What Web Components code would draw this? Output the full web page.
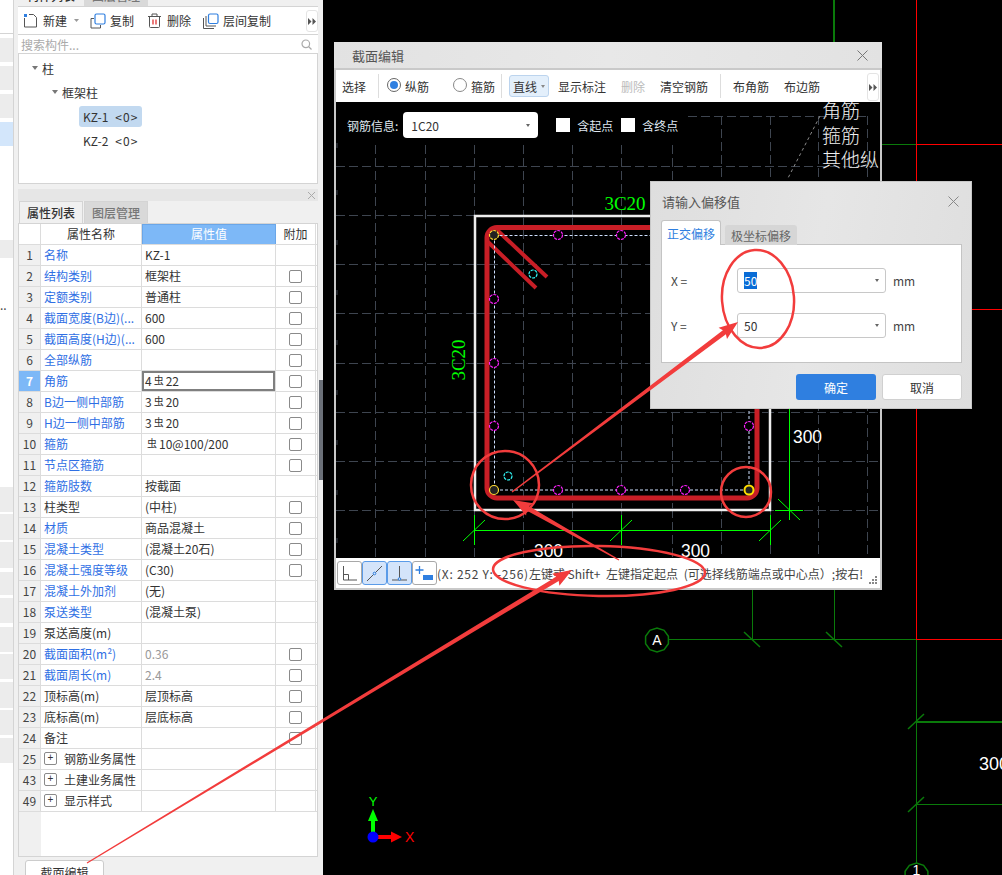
<!DOCTYPE html>
<html lang="zh">
<head>
<meta charset="utf-8">
<title>截面编辑</title>
<style>
  html, body { margin: 0; height: 100%; background: #000; overflow: hidden; }
  body { font: 12px "Noto Sans CJK SC", "Noto Sans", sans-serif; color: #333; }
</style>
</head>
<body>
<app-shell>
  <side-strip></side-strip>
  <left-dock>
    <component-panel></component-panel>
    <prop-panel></prop-panel>
  </left-dock>
  <cad-view>
    <section-editor></section-editor>
    <offset-dialog></offset-dialog>
  </cad-view>
  <markup-overlay></markup-overlay>
</app-shell>

<script>
const FONT = '"Noto Sans CJK SC", "Noto Sans", sans-serif';
const MORE_ICON = `<svg width="8" height="7" viewBox="0 0 8 7"><path d="M0 0l3.5 3.5L0 7zM4.5 0L8 3.5 4.5 7z" fill="#555"/></svg>`;

class AppShell extends HTMLElement {
  constructor() {
    super();
    this.attachShadow({ mode: 'open' });
    this.shadowRoot.innerHTML = `
      <style>
        :host { display: flex; position: relative; width: 1002px; height: 875px; overflow: hidden; background: #000; }
      </style>
      <slot></slot>
    `;
  }
}
customElements.define('app-shell', AppShell);

// narrow strip of the module list, cut by the left of the window
class SideStrip extends HTMLElement {
  constructor() {
    super();
    this.attachShadow({ mode: 'open' });
    const gaps = [[38, 24, 0], [66, 24, 0], [94, 24, 0], [122, 24, 1], [240, 18, 0], [487, 25, 0], [514, 26, 0], [542, 26, 0],
      [572, 23, 0], [598, 25, 0], [627, 25, 0], [654, 25, 0], [682, 26, 0], [710, 25, 0], [738, 25, 0]];
    let y = 34;
    let html = '';
    gaps.forEach(([top, h, sel]) => {
      html += `<div style="margin-top:${top - y}px;height:${h}px;background:${sel ? '#d3e6fb' : '#ececec'}"></div>`;
      y = top + h;
    });
    this.shadowRoot.innerHTML = `
      <style>
        :host { display: block; flex: 0 0 13px; height: 875px; box-sizing: content-box; background: #fff; border-right: 1px solid #d4d4d4; position: relative; }
        .top { height: 33px; border-bottom: 1px solid #d4d4d4; }
        .dots { position: absolute; left: 0; top: 301px; color: #444; font: 12px ${FONT}; line-height: 8px; }
      </style>
      <div class="top"></div>${html}<div class="dots">..</div>
    `;
  }
}
customElements.define('side-strip', SideStrip);

class LeftDock extends HTMLElement {
  constructor() {
    super();
    this.attachShadow({ mode: 'open' });
    this.shadowRoot.innerHTML = `
      <style>
        :host { display: flex; flex-direction: column; flex: 0 0 309px; height: 875px; box-sizing: border-box; padding: 0 5px 0 4px; background: #f0f0f0; overflow: hidden; position: relative; }
        .grip { position: absolute; right: 0; top: 380px; width: 4px; height: 100px; background: #6b7078; }
      </style>
      <slot></slot>
      <div class="grip"></div>
    `;
  }
}
customElements.define('left-dock', LeftDock);

class ComponentPanel extends HTMLElement {
  constructor() {
    super();
    this.attachShadow({ mode: 'open' });
    this.shadowRoot.innerHTML = `
      <style>
        :host { display: block; font: 12px ${FONT}; color: #333; }
        .tabs { display: flex; height: 6px; align-items: flex-end; overflow: hidden; border-bottom: 1px solid #d4d4d4; padding-left: 1px; }
        .tabs span { flex: 0 0 64px; height: 22px; line-height: 24px; text-align: center; font-weight: 500; margin-right: 1px; }
        .tabs span + span { background: #d9d9d9; color: #777; }
        .bar { display: flex; align-items: center; height: 27px; background: #fff; border-bottom: 1px solid #d4d4d4; position: relative; }
        .bar svg { display: block; flex: none; }
        .it { display: flex; align-items: center; }
        .more { position: absolute; left: 288px; top: 3px; width: 10px; height: 20px; border: 1px solid #e4e4e4; border-radius: 3px; display: flex; align-items: center; justify-content: center; }
        .search { display: flex; align-items: center; justify-content: space-between; height: 18px; padding: 0 6px 0 3px; background: #fff; border-bottom: 1px solid #d4d4d4; color: #aaa; }
        .tree { height: 130px; box-sizing: border-box; background: #fff; border: 1px solid #d4d4d4; border-top: 0; padding-top: 2px; }
        .row { display: flex; align-items: center; height: 24px; }
        .row i { width: 0; height: 0; border: 3px solid transparent; border-top: 4px solid #777; border-bottom: 0; margin-right: 4px; }
        .kz { display: inline-flex; align-items: center; height: 21px; padding: 0 4px; margin-left: 60px; border-radius: 3px; }
        .kz.sel { background: #c2d9f0; }
        .kz small { font-size: 12px; margin-left: 7px; letter-spacing: 1px; }
      </style>
      <div class="tabs"><span>构件列表</span><span>图层管理</span></div>
      <div class="bar">
        <div class="it" style="margin-left:5px">
          <svg width="15" height="15" viewBox="0 0 15 15"><path d="M1.5 5v9h12V4.500L10.500 1.500H6" fill="none" stroke="#555"/><path d="M1 1h3v3H1z" fill="#2f7fe0"/></svg>
          <span style="margin-left:5px">新建</span>
          <svg width="5" height="3" viewBox="0 0 5 3" style="margin-left:7px"><path d="M0 0h5L2.500 3z" fill="#999"/></svg>
        </div>
        <div class="it" style="margin-left:11px">
          <svg width="16" height="16" viewBox="0 0 16 16"><path d="M1 5.500v9.500h9.500" fill="none" stroke="#555"/><path d="M1 5.500h3M10.500 12v3" stroke="#555" fill="none"/><rect x="5" y="1" width="10" height="10" rx="1.500" fill="#fff" stroke="#2f7fe0" stroke-width="1.200"/></svg>
          <span style="margin-left:4px">复制</span>
        </div>
        <div class="it" style="margin-left:13px">
          <svg width="15" height="15" viewBox="0 0 15 15"><path d="M2.500 4v9.500a1 1 0 0 0 1 1h8a1 1 0 0 0 1-1V4M1 3.500h13M5 3.500V1h5v2.500" fill="none" stroke="#555"/><path d="M6 6.500v5M9 6.500v5" stroke="#d22" stroke-width="1.200"/></svg>
          <span style="margin-left:5px">删除</span>
        </div>
        <div class="it" style="margin-left:12px">
          <svg width="16" height="16" viewBox="0 0 16 16"><path d="M.5 5v10.500H11M3 3v10h10" fill="none" stroke="#555"/><rect x="5.500" y="1" width="9.500" height="9.500" rx="1.500" fill="#fff" stroke="#2f7fe0" stroke-width="1.200"/></svg>
          <span style="margin-left:4px">层间复制</span>
        </div>
        <div class="more">${MORE_ICON}</div>
      </div>
      <div class="search"><span>搜索构件...</span>
        <svg width="11" height="11" viewBox="0 0 11 11"><circle cx="4.800" cy="4.800" r="3.800" fill="none" stroke="#aaa" stroke-width="1.200"/><path d="M7.500 7.500L10.500 10.500" stroke="#aaa" stroke-width="1.200"/></svg>
      </div>
      <div class="tree">
        <div class="row" style="padding-left:13px"><i></i>柱</div>
        <div class="row" style="padding-left:33px"><i></i>框架柱</div>
        <div class="row"><span class="kz sel">KZ-1<small>&lt;0&gt;</small></span></div>
        <div class="row"><span class="kz">KZ-2<small>&lt;0&gt;</small></span></div>
      </div>
    `;
  }
}
customElements.define('component-panel', ComponentPanel);

class PropPanel extends HTMLElement {
  constructor() {
    super();
    this.attachShadow({ mode: 'open' });
    const bar = '<sup>虫</sup>';
    // [no, name, value, blue name, checkbox, extra]
    const rows = [
      [1, '名称', 'KZ-1', 1, 0],
      [2, '结构类别', '框架柱', 1, 1],
      [3, '定额类别', '普通柱', 1, 1],
      [4, '截面宽度(B边)(...', '600', 1, 1],
      [5, '截面高度(H边)(...', '600', 1, 1],
      [6, '全部纵筋', '', 1, 1],
      [7, '角筋', `4${bar}22`, 1, 1, 'sel'],
      [8, 'B边一侧中部筋', `3${bar}20`, 1, 1],
      [9, 'H边一侧中部筋', `3${bar}20`, 1, 1],
      [10, '箍筋', `${bar}10@100/200`, 1, 1],
      [11, '节点区箍筋', '', 1, 1],
      [12, '箍筋肢数', '按截面', 1, 0],
      [13, '柱类型', '(中柱)', 0, 1],
      [14, '材质', '商品混凝土', 1, 1],
      [15, '混凝土类型', '(混凝土20石)', 1, 1],
      [16, '混凝土强度等级', '(C30)', 1, 1],
      [17, '混凝土外加剂', '(无)', 1, 0],
      [18, '泵送类型', '(混凝土泵)', 1, 0],
      [19, '泵送高度(m)', '', 0, 0],
      [20, '截面面积(m²)', '0.36', 1, 1, 'dim'],
      [21, '截面周长(m)', '2.4', 1, 1, 'dim'],
      [22, '顶标高(m)', '层顶标高', 0, 1],
      [23, '底标高(m)', '层底标高', 0, 1],
      [24, '备注', '', 0, 1],
      [25, '钢筋业务属性', '', 0, 0, 'plus'],
      [43, '土建业务属性', '', 0, 0, 'plus'],
      [49, '显示样式', '', 0, 0, 'plus']
    ];
    const rowHtml = rows.map(([no, name, val, blue, check, extra]) => `
      <div class="r">
        <div class="no ${extra === 'sel' ? 'on' : ''}">${no}</div>
        <div class="name ${blue ? 'blue' : ''}">${extra === 'plus' ? '<b class="plus">+</b>' : ''}${name}</div>
        <div class="val ${extra === 'plus' ? '' : extra || ''}">${val}</div>
        <div class="add">${check ? '<em></em>' : ''}</div>
      </div>`).join('');
    this.shadowRoot.innerHTML = `
      <style>
        :host { display: flex; flex-direction: column; margin-top: 5px; font: 12px ${FONT}; color: #333; }
        .title { height: 12px; background: #e6e6e6; position: relative; }
        .title svg { position: absolute; right: 3px; top: 3px; }
        .tabs { display: flex; height: 23px; padding-left: 1px; align-items: stretch; border-bottom: 1px solid #d4d4d4; box-sizing: border-box; }
        .tabs span { flex: 0 0 64px; margin-right: 1px; display: flex; align-items: center; justify-content: center; font-weight: 500; border: 1px solid #d4d4d4; border-width: 1px 1px 0 1px; box-sizing: border-box; }
        .tabs span + span { background: #d9d9d9; color: #777; }
        .body { background: #fff; border: 1px solid #d4d4d4; border-top: 0; height: 633px; display: flex; flex-direction: column; box-sizing: border-box; }
        .r { display: grid; grid-template-columns: 22px 101px 134px 40px; height: 21px; box-sizing: border-box; border-bottom: 1px solid #dcdcdc; }
        .r > div { border-right: 1px solid #dcdcdc; display: flex; align-items: center; white-space: nowrap; overflow: hidden; padding-bottom: 2px; box-sizing: border-box; }
        .r > .add { padding-bottom: 0; }
        .head > div { justify-content: center; }
        .head .v { background: #7db8f7; color: #fff; border: 1px solid #6aa6e8; border-bottom: 0; }
        .no { justify-content: center; background: #f0f0f0; color: #444; }
        .no.on { background: #7db8f7; color: #fff; font-weight: 700; }
        .name { padding-left: 3px; }
        .name.blue { color: #2f6fe4; }
        .val { padding-left: 3px; }
        .val.dim { color: #999; }
        .val.sel { box-shadow: inset 0 0 0 2px #7f7f7f; }
        sup { font-size: 10px; line-height: 1; vertical-align: 3px; margin: 0 2px; }
        .add { justify-content: center; }
        .add em { display: block; width: 13px; height: 13px; border: 1px solid #8a8a8a; border-radius: 2px; box-sizing: border-box; }
        .plus { display: inline-flex; align-items: center; justify-content: center; width: 11px; height: 11px; margin-right: 7px; border: 1px solid #8a8a8a; border-radius: 2px; font: 400 10px/1 "Liberation Sans", sans-serif; box-sizing: content-box; }
        .rest { flex: 1; width: 22px; background: #f0f0f0; }
        .btn { align-self: flex-start; margin: 3px 0 0 7px; width: 79px; height: 24px; background: #fff; border: 1px solid #ccc; border-radius: 3px; display: flex; align-items: center; justify-content: center; box-sizing: border-box; }
      </style>
      <div class="title"><svg width="7" height="7" viewBox="0 0 7 7"><path d="M0 0l7 7M7 0L0 7" stroke="#aaa"/></svg></div>
      <div class="tabs"><span>属性列表</span><span>图层管理</span></div>
      <div class="body">
        <div class="r head"><div></div><div>属性名称</div><div class="v">属性值</div><div>附加</div></div>
        ${rowHtml}
        <div class="rest"></div>
      </div>
      <div class="btn">截面编辑</div>
    `;
  }
}
customElements.define('prop-panel', PropPanel);

// main drawing behind the floating windows
class CadView extends HTMLElement {
  constructor() {
    super();
    this.attachShadow({ mode: 'open' });
    const G = '#0a7a0a';
    const tick = (x1, y1, x2, y2) => `<path d="M${x1} ${y1}L${x2} ${y2}" stroke="${G}" stroke-width="1.500"/>`;
    const octa = (cx, cy, r) => {
      const pts = [];
      for (let i = 0; i < 10; i++) {
        const a = (i * 36 + 18) * Math.PI / 180;
        pts.push(`${(cx + r * Math.cos(a)).toFixed(1)},${(cy + r * Math.sin(a)).toFixed(1)}`);
      }
      return `<polygon points="${pts.join(' ')}" fill="#000" stroke="${G}" stroke-width="1.500"/>`;
    };
    this.shadowRoot.innerHTML = `
      <style>
        :host { display: block; flex: 1; height: 875px; position: relative; background: #000; }
        svg { position: absolute; left: 0; top: 0; display: block; }
        text { font-family: "Liberation Sans", sans-serif; }
      </style>
      <svg width="679" height="875" viewBox="323 0 679 875">
        <path d="M834 0V42" stroke="${G}" stroke-width="2"/>
        <path d="M882 144.500H916M752.500 588V640M834.500 588V640M668 639.500H916M916.500 639.500V864" stroke="${G}" fill="none"/>
        <path d="M916.500 722H1002" stroke="${G}" stroke-width="2"/>
        <path d="M916.500 804.500H1002" stroke="${G}"/>
        ${tick(744, 632, 760, 647)}${tick(826, 632, 842, 647)}${tick(908, 729, 924, 714)}${tick(908, 812, 924, 797)}
        <path d="M916.500 0V640M916 144.500H1002M972 309.500H1002M916 639.500H1002" stroke="#f00" fill="none"/>
        ${octa(657, 640, 12)}
        <text x="657" y="645" fill="#fff" font-size="14" text-anchor="middle">A</text>
        ${octa(916.5, 875, 12)}
        <text x="916.500" y="875" fill="#fff" font-size="14" text-anchor="middle">1</text>
        <text x="979" y="770" fill="#fff" font-size="18">300</text>
        <path d="M373 836V817" stroke="#0f0" stroke-width="4"/><path d="M373 809l5 12h-10z" fill="#0f0"/>
        <text x="373" y="806" fill="#0f0" font-size="13" text-anchor="middle">Y</text>
        <path d="M373 837h20" stroke="#f00" stroke-width="4"/><path d="M402 837l-11-5.500v11z" fill="#f00"/>
        <text x="405" y="842" fill="#f00" font-size="14">X</text>
        <circle cx="373" cy="837" r="5.500" fill="#00f"/>
      </svg>
      <slot></slot>
    `;
  }
}
customElements.define('cad-view', CadView);

class SectionEditor extends HTMLElement {
  constructor() {
    super();
    this.attachShadow({ mode: 'open' });
    this.shadowRoot.innerHTML = `
      <style>
        :host { display: flex; flex-direction: column; position: absolute; left: 11px; top: 42px; width: 548px; height: 548px; box-sizing: border-box; background: #c9c9c9; padding: 0 2px 2px 2px; font: 12px ${FONT}; color: #333; }
        .title { margin: 0 -2px; height: 26px; flex: none; background: linear-gradient(90deg, #e2e2e2, #e8e8e8 50%, #e2e2e2); display: flex; align-items: center; justify-content: space-between; padding: 0 14px 0 18px; color: #555; font-size: 13px; }
        .bar { margin-top: 2px; height: 32px; flex: none; background: #fff; display: flex; align-items: center; position: relative; }
        .bar > * { position: absolute; white-space: nowrap; }
        .sep { width: 1px; height: 24px; top: 4px; background: #ddd; }
        .radio { width: 14px; height: 14px; top: 8px; border: 1px solid #888; border-radius: 50%; box-sizing: border-box; }
        .radio.on { border-color: #666; }
        .radio.on::after { content: ""; position: absolute; left: 2px; top: 2px; width: 8px; height: 8px; border-radius: 50%; background: #2f7fe0; }
        .drop { left: 173px; top: 5px; width: 40px; height: 22px; box-sizing: border-box; background: #e3effb; border: 1px solid #bcd4ee; border-radius: 3px; display: flex; align-items: center; padding-left: 3px; gap: 4px; }
        .drop i { width: 0; height: 0; border: 2.500px solid transparent; border-top: 3px solid #888; border-bottom: 0; }
        .more { left: 531px; top: 3px; width: 10px; height: 26px; border: 1px solid #e4e4e4; border-radius: 3px; display: flex; align-items: center; justify-content: center; }
        .canvas { flex: 1; background: #000; position: relative; overflow: hidden; }
        .canvas svg { position: absolute; left: 0; top: 0; display: block; }
        .info { position: absolute; left: 11px; top: 10px; display: flex; align-items: center; color: #dfe6ee; height: 26px; }
        .sel { width: 135px; height: 26px; margin-left: 5px; box-sizing: border-box; background: #fff; color: #333; border-radius: 4px; display: flex; align-items: center; justify-content: space-between; padding: 0 8px 0 8px; }
        .sel i { width: 0; height: 0; border: 2.500px solid transparent; border-top: 3px solid #666; border-bottom: 0; }
        .cb { width: 14px; height: 14px; background: #fff; margin-right: 7px; }
        .status { height: 30px; flex: none; background: #fff; display: flex; align-items: center; position: relative; overflow: hidden; }
        .tools { display: flex; margin-left: 1px; flex: none; }
        .tools b { display: flex; width: 25px; height: 24px; box-sizing: border-box; border: 1px solid #a8a8a8; border-radius: 3px; align-items: center; justify-content: center; }
        .tools b.on { background: #d4e4fa; border-color: #5a9be8; }
        .msg { white-space: nowrap; width: 429px; overflow: hidden; flex: none; color: #444; }
        .msg .xy { letter-spacing: .75px; }
        .msg .gap { margin-left: 3px; }
        .grip { position: absolute; right: 3px; bottom: 4px; }
      </style>
      <div class="title"><span>截面编辑</span>
        <svg width="11" height="11" viewBox="0 0 11 11"><path d="M.5 .5l10 10M10.500 .5l-10 10" stroke="#777"/></svg>
      </div>
      <div class="bar">
        <span style="left:6px">选择</span>
        <div class="sep" style="left:42px"></div>
        <div class="radio on" style="left:51px"></div><span style="left:69px">纵筋</span>
        <div class="radio" style="left:117px"></div><span style="left:135px">箍筋</span>
        <div class="sep" style="left:165px"></div>
        <div class="drop"><span>直线</span><i></i></div>
        <span style="left:222px">显示标注</span>
        <span style="left:285px;color:#bbb">删除</span>
        <span style="left:324px">清空钢筋</span>
        <div class="sep" style="left:384px"></div>
        <span style="left:397px">布角筋</span>
        <span style="left:448px">布边筋</span>
        <div class="more">${MORE_ICON}</div>
      </div>
      <div class="canvas">
        <svg id="draw" width="544" height="456" viewBox="336 102 544 456"></svg>
        <div class="info">
          <span>钢筋信息:</span>
          <div class="sel"><span>1C20</span><i></i></div>
          <div class="cb" style="margin-left:18px"></div><span>含起点</span>
          <div class="cb" style="margin-left:8px"></div><span>含终点</span>
        </div>
      </div>
      <div class="status">
        <div class="tools">
          <b><svg width="17" height="17" viewBox="0 0 17 17" fill="none" stroke="#555"><path d="M2.500 1v14H16M2.500 9.500h5v5.500"/></svg></b>
          <b class="on"><svg width="17" height="17" viewBox="0 0 17 17" fill="none" stroke="#555"><path d="M1 16L16 1"/><circle cx="8.500" cy="8.500" r="1.300" stroke="#2f7fe0" fill="#d4e4fa"/></svg></b>
          <b class="on"><svg width="17" height="17" viewBox="0 0 17 17" fill="none" stroke="#555"><path d="M8.500 1v13M1 15h15"/><circle cx="8.500" cy="14" r="1.300" stroke="#2f7fe0" fill="#d4e4fa"/></svg></b>
          <b><svg width="19" height="17" viewBox="0 0 19 17" fill="none"><path d="M4.500 1v8M.5 5h8" stroke="#2f7fe0" stroke-width="1.300"/><rect x="8" y="10" width="10" height="5" fill="#2f7fe0"/></svg></b>
        </div>
        <div class="msg"><span class="xy">(X: 252 Y: -256)</span>左键或 Shift+<span class="gap"> 左键指定起点</span><span class="gap"> (可选择线筋端点或中心点）;按右!</span></div>
        <svg class="grip" width="8" height="8" viewBox="0 0 8 8" fill="#888"><path d="M6 0h2v2H6zM3 3h2v2H3zM6 3h2v2H6zM0 6h2v2H0zM3 6h2v2H3zM6 6h2v2H6z"/></svg>
      </div>
    `;
    this.shadowRoot.getElementById('draw').innerHTML = this.drawing();
  }

  drawing() {
    const GRID = '#3e4550';
    const GREEN = '#00ff00';
    let s = '';
    // dashed construction grid
    [375, 425, 474, 523, 572, 621, 672].forEach(x => {
      s += `<path d="M${x}.5 145V558" stroke="${GRID}" stroke-dasharray="9 4"/>`;
    });
    [721, 770, 818, 867].forEach(x => {
      s += `<path d="M${x}.5 116V558" stroke="${GRID}" stroke-dasharray="9 4"/>`;
    });
    s += `<path d="M688 116.500H868" stroke="${GRID}" stroke-dasharray="9 4"/>`;
    [166, 215, 264, 313, 363, 412, 461, 510].forEach(y => {
      s += `<path d="M336 ${y}.5H879" stroke="${GRID}" stroke-dasharray="9 4"/>`;
    });
    [143, 190, 240, 290, 340, 390, 440, 490, 538].forEach(y => {
      s += `<path d="M337 ${y}v5" stroke="${GRID}"/>`;
    });
    s += `<path d="M820 116L787 180" stroke="#8a8a8a" stroke-dasharray="3 3"/>`;
    // section outline and stirrup
    s += `<rect x="475" y="216" width="295" height="294" fill="#000" stroke="#eee" stroke-width="2.500"/>`;
    [523, 572, 621, 672, 721].forEach(x => {
      s += `<path d="M${x}.5 217V509" stroke="${GRID}" stroke-dasharray="9 4"/>`;
    });
    [264, 313, 363, 412, 461].forEach(y => {
      s += `<path d="M476 ${y}.5H769" stroke="${GRID}" stroke-dasharray="9 4"/>`;
    });
    s += `<rect x="487" y="227.500" width="270" height="270.500" rx="10" fill="none" stroke="#c81e26" stroke-width="5"/>`;
    s += `<path d="M497 230L547 277M488 242L536 288" stroke="#c81e26" stroke-width="4"/>`;
    s += `<rect x="494.500" y="235.500" width="254.500" height="254.500" fill="none" stroke="#cfe0ff" stroke-dasharray="3 2"/>`;
    [[558, 235], [621, 235], [685, 235], [494, 299], [494, 363], [494, 426], [749, 426], [558, 490], [621, 490], [685, 490]].forEach(([x, y]) => {
      s += `<circle cx="${x}" cy="${y}" r="4.500" fill="#000" stroke="#ff20ff" stroke-width="1.200" stroke-dasharray="3 1"/>`;
    });
    [[533, 274], [508, 476]].forEach(([x, y]) => {
      s += `<circle cx="${x}" cy="${y}" r="4" fill="#000" stroke="#3ff" stroke-width="1.200" stroke-dasharray="3 1"/>`;
    });
    s += `<circle cx="494" cy="235" r="4.500" fill="#222" stroke="#fd3" stroke-width="1.200" stroke-dasharray="3 1"/>`;
    s += `<circle cx="494" cy="490" r="4.500" fill="#222" stroke="#fd3" stroke-width="1.200"/>`;
    s += `<circle cx="749" cy="490" r="4.500" fill="#222" stroke="#fd0" stroke-width="2"/>`;
    // dimensions
    s += `<path d="M474 530.500H770M474.500 515V545M621.500 515V545M770.500 515V545M463 541L485 520M610 541L632 520M759 541L781 520M789.500 409V520M775 510.500H803M778 499L800 520" stroke="${GREEN}" fill="none"/>`;
    s += `<text x="625" y="210" fill="${GREEN}" font-size="19" text-anchor="middle" font-family="Liberation Serif">3C20</text>`;
    s += `<text transform="translate(465 360) rotate(-90)" fill="${GREEN}" font-size="19" text-anchor="middle" font-family="Liberation Serif">3C20</text>`;
    [[534, 557], [681, 557], [793, 443]].forEach(([x, y]) => {
      s += `<text x="${x}" y="${y}" fill="#fff" font-size="19" textLength="29" lengthAdjust="spacingAndGlyphs" font-family="Liberation Sans">300</text>`;
    });
    ['角筋', '箍筋', '其他纵'].forEach((t, i) => {
      s += `<text x="822" y="${118 + i * 24.5}" fill="#f0f0f0" font-size="19" font-family="'Noto Sans CJK SC'" font-weight="300">${t}</text>`;
    });
    return s;
  }
}
customElements.define('section-editor', SectionEditor);

class OffsetDialog extends HTMLElement {
  constructor() {
    super();
    this.attachShadow({ mode: 'open' });
    this.shadowRoot.innerHTML = `
      <style>
        :host { display: flex; flex-direction: column; position: absolute; left: 327px; top: 181px; width: 322px; height: 228px; box-sizing: border-box; padding: 0 9px 0 10px; background: linear-gradient(100deg, #dedede, #e6e6e6 50%, #dedede); border: 1px solid #c8c8c8; font: 12px ${FONT}; color: #444; }
        .title { height: 38px; flex: none; display: flex; align-items: center; justify-content: space-between; font-size: 13px; color: #555; padding: 0 3px 0 1px; }
        .tabs { display: flex; align-items: flex-end; height: 25px; flex: none; gap: 4px; margin-bottom: -1px; position: relative; }
        .tabs span { display: flex; align-items: center; justify-content: center; }
        .a { width: 60px; height: 25px; background: #fff; color: #2f7fe0; border: 1px solid #c4c4c4; border-bottom: 0; border-radius: 3px 3px 0 0; box-sizing: border-box; }
        .b { width: 72px; height: 20px; background: #d6d6d6; color: #666; border-radius: 3px 3px 0 0; }
        .box { height: 119px; flex: none; background: #fff; border: 1px solid #c4c4c4; box-sizing: border-box; padding-top: 23px; display: flex; flex-direction: column; gap: 20px; }
        .line { display: flex; align-items: center; height: 25px; padding-left: 9px; }
        .line .lb { width: 66px; }
        .in { width: 149px; height: 25px; box-sizing: border-box; border: 1px solid #c8c8c8; border-radius: 3px; display: flex; align-items: center; justify-content: space-between; padding: 0 6px; color: #333; margin-right: 7px; }
        .in i { width: 0; height: 0; border: 2.500px solid transparent; border-top: 3px solid #666; border-bottom: 0; }
        .hi { background: #0a6cd6; color: #fff; }
        .btns { display: flex; justify-content: flex-end; gap: 6px; margin-top: 11px; }
        .btns span { width: 80px; height: 26px; display: flex; align-items: center; justify-content: center; border-radius: 3px; box-sizing: border-box; }
        .ok { background: #2f7fe0; color: #fff; }
        .no { background: #fff; border: 1px solid #d0d0d0; color: #333; }
      </style>
      <div class="title"><span>请输入偏移值</span>
        <svg width="11" height="11" viewBox="0 0 11 11"><path d="M.5 .5l10 10M10.500 .5l-10 10" stroke="#888"/></svg>
      </div>
      <div class="tabs"><span class="a">正交偏移</span><span class="b">极坐标偏移</span></div>
      <div class="box">
        <div class="line"><span class="lb">X =</span><div class="in"><span class="hi">50</span><i></i></div><span>mm</span></div>
        <div class="line"><span class="lb">Y =</span><div class="in"><span>50</span><i></i></div><span>mm</span></div>
      </div>
      <div class="btns"><span class="ok">确定</span><span class="no">取消</span></div>
    `;
  }
}
customElements.define('offset-dialog', OffsetDialog);

// hand drawn red notes on top of the whole screenshot
class MarkupOverlay extends HTMLElement {
  constructor() {
    super();
    this.attachShadow({ mode: 'open' });
    const RED = '#f23c3c';
    const arrow = (tx, ty, hx, hy, w) => {
      const len = Math.hypot(hx - tx, hy - ty);
      const ux = (hx - tx) / len, uy = (hy - ty) / len;
      const nx = -uy, ny = ux;
      const bx = hx - ux * 17, by = hy - uy * 17;
      const p = [
        [tx + nx * .6, ty + ny * .6],
        [bx + nx * w / 2, by + ny * w / 2],
        [bx - ux * 2 + nx * 7, by - uy * 2 + ny * 7],
        [hx, hy],
        [bx - ux * 2 - nx * 7, by - uy * 2 - ny * 7],
        [bx - nx * w / 2, by - ny * w / 2],
        [tx - nx * .6, ty - ny * .6]
      ];
      return `<polygon fill="${RED}" points="${p.map(q => q.map(v => v.toFixed(1)).join(',')).join(' ')}"/>`;
    };
    this.shadowRoot.innerHTML = `
      <style>
        :host { display: block; position: absolute; left: 0; top: 0; width: 1002px; height: 875px; pointer-events: none; }
        svg { display: block; }
      </style>
      <svg width="1002" height="875" viewBox="0 0 1002 875">
        <g fill="none" stroke="${RED}" stroke-width="2.500">
          <ellipse cx="758" cy="299" rx="36" ry="49" transform="rotate(-4 758 299)"/>
          <ellipse cx="505" cy="485" rx="34" ry="34"/>
          <ellipse cx="746" cy="492" rx="25" ry="25"/>
          <ellipse cx="599" cy="571" rx="106" ry="25" transform="rotate(1 599 571)"/>
        </g>
        ${arrow(87, 863, 572, 570, 5)}
        ${arrow(512, 492, 738, 322, 5)}
        ${arrow(619, 560, 513, 500, 5)}
      </svg>
    `;
  }
}
customElements.define('markup-overlay', MarkupOverlay);
</script>
</body>
</html>
